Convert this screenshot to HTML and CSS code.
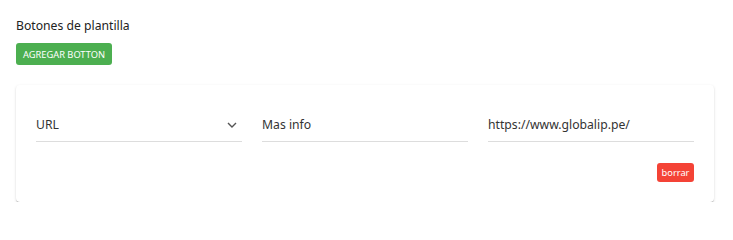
FILE: index.html
```html
<!DOCTYPE html>
<html lang="es">
<head>
<meta charset="utf-8">
<title>Botones de plantilla</title>
<link rel="stylesheet" href="styles.css">
</head>
<body>
<div class="page">
  <div class="title">Botones de plantilla</div>
  <button class="btn btn-green">AGREGAR BOTTON</button>
  <div class="card">
    <div class="fields">
      <div class="field select">
        <span class="value">URL</span>
        <svg class="chevron" width="10" height="6" viewBox="0 0 10 6"><path d="M1 1 L5 5 L9 1" fill="none" stroke="#555" stroke-width="1.4"/></svg>
      </div>
      <div class="field"><span class="value">Mas info</span></div>
      <div class="field"><span class="value">https://www.globalip.pe/</span></div>
    </div>
    <div class="actions">
      <button class="btn btn-red">borrar</button>
    </div>
  </div>
</div>
</body>
</html>
```

FILE: styles.css
```css
* { box-sizing: border-box; }
html, body { margin: 0; background: #fff; }
body {
  font-family: "Noto Sans", "Open Sans", sans-serif;
  color: #333;
}
.page {
  padding: 18px 19px 0 16px;
  display: flex;
  flex-direction: column;
  align-items: flex-start;
}
.title {
  font-size: 12.2px;
  line-height: 16px;
  color: #222;
  margin-bottom: 9px;
}
.btn {
  border: none;
  border-radius: 3px;
  color: #fff;
  font-family: inherit;
  cursor: pointer;
  padding: 0;
  display: flex;
  align-items: center;
  justify-content: center;
}
.btn-green {
  background: #4caf50;
  width: 96px;
  height: 22px;
  font-size: 9.3px;
  margin-bottom: 20px;
}
.btn-red {
  background: #f44336;
  width: 37px;
  height: 19px;
  font-size: 9.3px;
}
.card {
  align-self: stretch;
  background: #fff;
  border-radius: 4px;
  box-shadow: 0 2px 1px -1px rgba(0,0,0,0.2), 0 1px 1px 0 rgba(0,0,0,0.14), 0 1px 3px 0 rgba(0,0,0,0.12);
  padding: 20px;
}
.fields {
  display: grid;
  grid-template-columns: 1fr 1fr 1fr;
  column-gap: 20px;
}
.field {
  height: 37px;
  padding: 12px 0 8px;
  border-bottom: 1px solid #ddd;
  display: flex;
  align-items: center;
  justify-content: space-between;
  font-size: 12.2px;
  line-height: 16px;
  color: #333;
}
.chevron { margin-right: 5px; }
.actions {
  display: flex;
  justify-content: flex-end;
  margin-top: 21px;
}
```
